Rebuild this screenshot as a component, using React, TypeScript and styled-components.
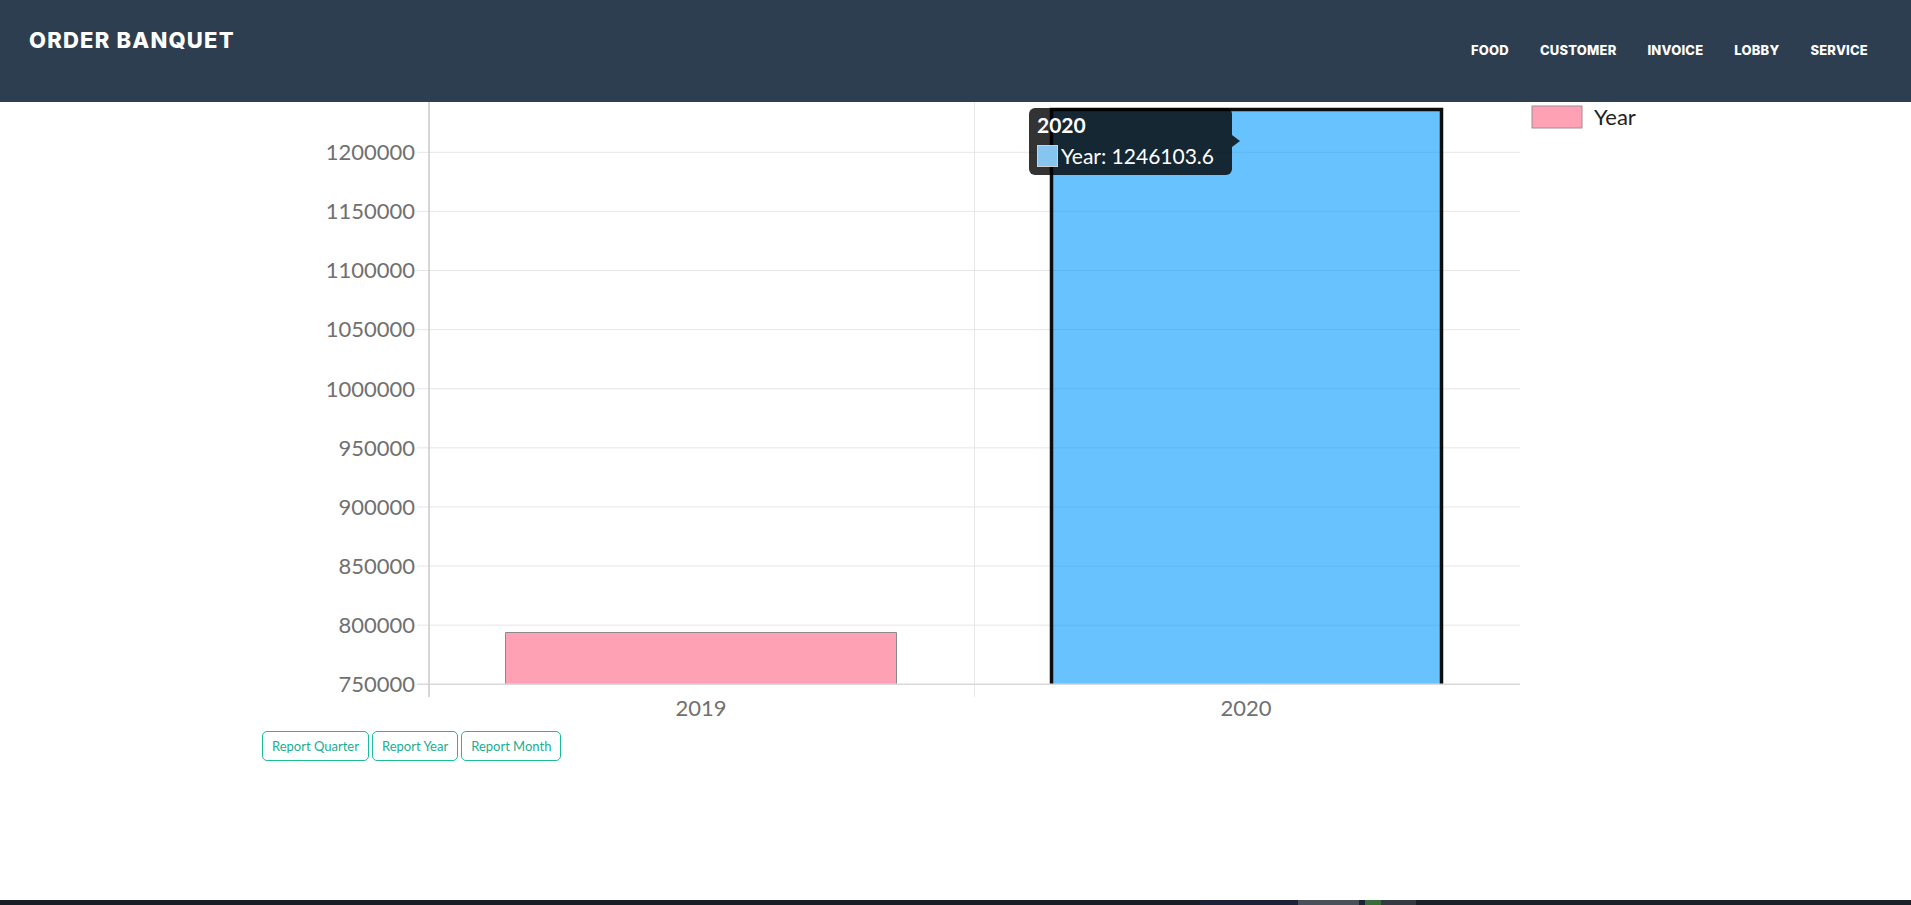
import React from "react";
import styled, { createGlobalStyle } from "styled-components";

const GlobalStyle = createGlobalStyle`
  html, body { margin: 0; padding: 0; background: #fff; }
  body { font-family: Lato, "Open Sans", sans-serif; }
  * { box-sizing: border-box; }
`;

const Page = styled.div`
  min-height: 100vh;
  display: flex;
  flex-direction: column;
`;

const Header = styled.header`
  height: 102px;
  background: #2d3e50;
  display: flex;
  justify-content: space-between;
  align-items: flex-start;
  padding: 0 43px 0 29px;
`;

const Brand = styled.div`
  margin-top: 29px;
  font-family: Inter, "Open Sans", sans-serif;
  font-weight: 800;
  font-size: 22px;
  line-height: 22px;
  letter-spacing: 1.2px;
  color: #fff;
`;

const Nav = styled.nav`
  margin-top: 44px;
  display: flex;
  gap: 31px;
`;

const NavItem = styled.a`
  font-family: Inter, "Open Sans", sans-serif;
  font-weight: 800;
  font-size: 13px;
  line-height: 13px;
  letter-spacing: 0.2px;
  color: #fff;
  text-decoration: none;
`;

const Main = styled.main`
  flex: 1;
  padding-left: 262px;
  display: flex;
  flex-direction: column;
`;

const ChartSvg = styled.svg`
  display: block;
  width: 1388px;
  height: 620px;
  font-family: Lato, sans-serif;
`;

const ButtonRow = styled.div`
  margin-top: 9px;
  display: flex;
  gap: 3px;
`;

const ReportButton = styled.button`
  height: 30px;
  padding: 0 9px;
  border: 1px solid #1abc9c;
  border-radius: 5px;
  background: #fff;
  color: #1aae91;
  font-family: Lato, sans-serif;
  font-size: 13px;
  cursor: pointer;
`;

const Taskbar = styled.div`
  height: 5px;
  display: flex;
  background: #1b2028;
`;

const TaskSeg = styled.div<{ $w: number; $c: string }>`
  width: ${(p) => p.$w}px;
  background: ${(p) => p.$c};
`;

const top = 152.3;
const step = 59.11;
const ticks = [1200000, 1150000, 1100000, 1050000, 1000000, 950000, 900000, 850000, 800000, 750000];
const yOf = (v: number) => top + ((1200000 - v) / 50000) * step;

function Chart() {
  const axisY = yOf(750000);
  return (
    <ChartSvg viewBox="262 102 1388 620">
      {ticks.slice(0, -1).map((t) => (
        <line key={t} x1={417} x2={1520} y1={yOf(t)} y2={yOf(t)} stroke="#e6e6e6" strokeWidth={1} />
      ))}
      <line x1={974.5} x2={974.5} y1={102} y2={697} stroke="#e8e8e8" strokeWidth={1} />
      {ticks.map((t) => (
        <text key={t} x={415} y={yOf(t) + 7.8} textAnchor="end" fontSize={22} fill="#707070">
          {t}
        </text>
      ))}
      <text x={701} y={716} textAnchor="middle" fontSize={22} fill="#707070">2019</text>
      <text x={1246} y={716} textAnchor="middle" fontSize={22} fill="#707070">2020</text>

      {/* 2019 bar */}
      <rect x={505.5} y={632.5} width={391} height={axisY - 632.5} fill="rgba(255,99,132,0.6)" />
      <polyline
        points={`505.5,${axisY} 505.5,632.5 896.5,632.5 896.5,${axisY}`}
        fill="none"
        stroke="#8a8a8a"
        strokeWidth={1}
      />
      {/* 2020 bar */}
      <rect x={1051.5} y={109.5} width={390} height={axisY - 109.5} fill="rgba(2,153,253,0.6)" />
      <polyline
        points={`1051.5,${axisY} 1051.5,109.5 1441.5,109.5 1441.5,${axisY}`}
        fill="none"
        stroke="#0d0d0d"
        strokeWidth={3.5}
      />

      <line x1={417} x2={1520} y1={axisY} y2={axisY} stroke="#d9d9d9" strokeWidth={1.5} />
      <line x1={429} x2={429} y1={102} y2={697} stroke="#c9c9c9" strokeWidth={1.5} />

      {/* legend */}
      <rect x={1532} y={106} width={50} height={22} fill="rgba(255,99,132,0.6)" stroke="#a48b93" strokeWidth={1} />
      <text x={1594} y={124.5} fontSize={22} fill="#222">Year</text>

      {/* tooltip */}
      <rect x={1029} y={108} width={203} height={67} rx={6} fill="rgba(0,0,0,0.8)" />
      <polygon points="1232,135 1240,141 1232,147" fill="rgba(0,0,0,0.8)" />
      <text x={1037} y={133} fontSize={21} fontWeight={700} fill="#fff">2020</text>
      <rect x={1037.5} y={145.5} width={20} height={21} fill="#86c5f0" stroke="#d0d0d0" strokeWidth={1} />
      <text x={1061} y={164} fontSize={21} fill="#fff">Year: 1246103.6</text>
    </ChartSvg>
  );
}

export default function App() {
  return (
    <Page>
      <GlobalStyle />
      <Header>
        <Brand>ORDER BANQUET</Brand>
        <Nav>
          <NavItem>FOOD</NavItem>
          <NavItem>CUSTOMER</NavItem>
          <NavItem>INVOICE</NavItem>
          <NavItem>LOBBY</NavItem>
          <NavItem>SERVICE</NavItem>
        </Nav>
      </Header>
      <Main>
        <Chart />
        <ButtonRow>
          <ReportButton>Report Quarter</ReportButton>
          <ReportButton>Report Year</ReportButton>
          <ReportButton>Report Month</ReportButton>
        </ButtonRow>
      </Main>
      <Taskbar>
        <TaskSeg $w={1200} $c="#1a1e26" />
        <TaskSeg $w={98} $c="#1c2238" />
        <TaskSeg $w={61} $c="#4a505a" />
        <TaskSeg $w={6} $c="#1c2238" />
        <TaskSeg $w={16} $c="#3a6b3a" />
        <TaskSeg $w={35} $c="#353a42" />
      </Taskbar>
    </Page>
  );
}
